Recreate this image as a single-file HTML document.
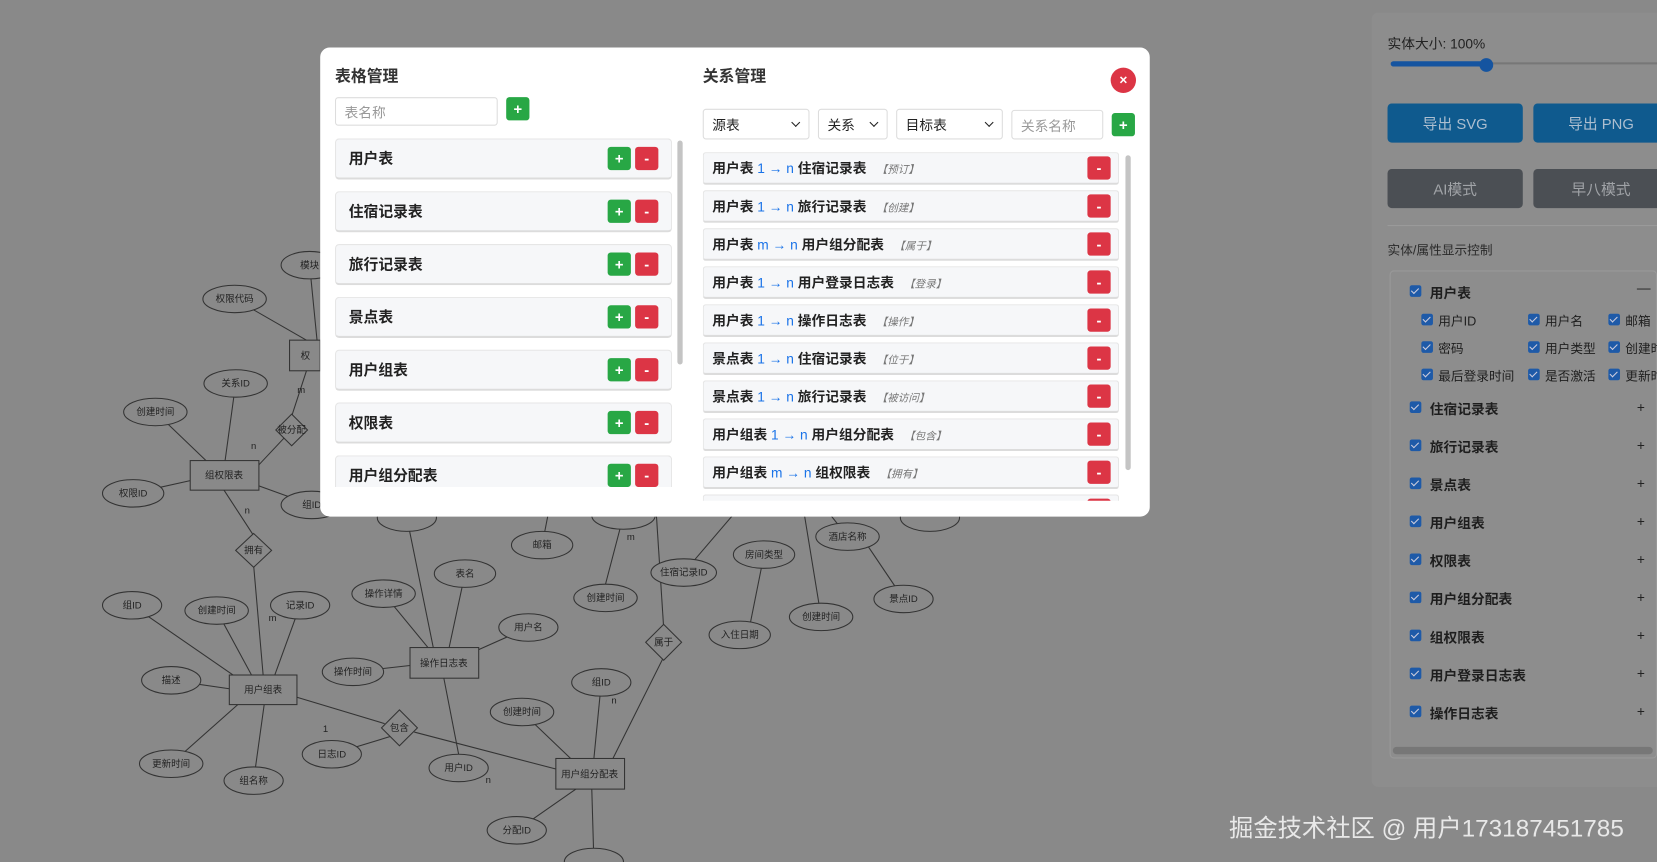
<!DOCTYPE html>
<html><head><meta charset="utf-8"><style>
*{box-sizing:border-box;margin:0;padding:0}
html,body{width:1657px;height:862px;overflow:hidden;background:#898989;font-family:"Liberation Sans","Noto Sans CJK SC",sans-serif}
#s{position:absolute;left:0;top:0;width:1568px;height:816px;transform-origin:0 0;transform:scale(1.05676,1.05637)}
.a{position:absolute}
.modal{left:303px;top:45px;width:785px;height:444px;background:#fff;border-radius:9px;overflow:hidden}
h3{position:absolute;font-size:15px;font-weight:bold;color:#333}
.inp{position:absolute;border:1px solid #ddd;border-radius:3px;background:#fff;font-size:13px;color:#999;padding-left:8px;display:flex;align-items:center}
.sel{color:#222}
.sel:after{content:"";position:absolute;right:9px;top:9px;width:5px;height:5px;border-right:1.6px solid #222;border-bottom:1.6px solid #222;transform:rotate(45deg)}
.g,.r{position:absolute;width:22px;height:22px;border-radius:3px;color:#fff;font-size:14px;font-weight:bold;display:flex;align-items:center;justify-content:center}
.g{background:#28a745}.r{background:#dc3545}
.it{position:absolute;left:14px;width:319px;height:39px;background:#f6f7f9;border:1px solid #e6e6e6;border-bottom:2px solid #dcdcdc;border-radius:4px;font-size:14px;font-weight:bold;color:#222;padding-left:12px;line-height:36px}
.rl{position:absolute;left:362px;width:394px;height:31px;background:#f6f7f9;border:1px solid #e6e6e6;border-bottom:2px solid #dcdcdc;border-radius:3px;font-size:13px;font-weight:bold;color:#222;padding-left:8px;line-height:29px;white-space:nowrap}
.rl b{color:#1a73e8;font-weight:normal}
.rl i{color:#777;font-size:10px;font-weight:normal;margin-left:6px}
.rl .r{left:363px;top:3px}
.panel{left:1298px;top:12px;width:280px;height:733px;background:#8d8d8d;border-radius:6px}
.pt{position:absolute;color:#222;font-size:13px;white-space:nowrap}
.btn{position:absolute;height:37px;border-radius:4px;color:#aebfd0;font-size:14px;display:flex;align-items:center;justify-content:center}
.cb{position:absolute;width:11px;height:11px;background:#1e5aa8;border-radius:2px}
.cb:after{content:"";position:absolute;left:3px;top:1px;width:3px;height:6px;border-right:1.5px solid #ccd;border-bottom:1.5px solid #ccd;transform:rotate(45deg)}
.en{position:absolute;font-size:13px;font-weight:bold;color:#1e1e1e;white-space:nowrap}
.at{position:absolute;font-size:12px;color:#1e1e1e;white-space:nowrap}
.pl{position:absolute;left:1549px;font-size:13px;color:#222}
</style></head><body><div id="s">
<svg class="a" style="left:0;top:0" width="1300" height="816" viewBox="0 0 1300 816" font-family="Liberation Sans,Noto Sans CJK SC,sans-serif" font-size="9" fill="none" stroke="#333" stroke-width="1">
<g>
<line x1="293" y1="251" x2="300" y2="322"/><line x1="222" y1="283" x2="290" y2="322"/><line x1="290" y1="351" x2="276" y2="394"/>
<line x1="223" y1="363" x2="213" y2="436"/><line x1="147" y1="390" x2="195" y2="436"/><line x1="276" y1="407" x2="245" y2="440"/>
<line x1="126" y1="467" x2="180" y2="455"/><line x1="295" y1="478" x2="245" y2="460"/><line x1="212" y1="464" x2="240" y2="507"/>
<line x1="240" y1="535" x2="249" y2="639"/><line x1="125" y1="573" x2="222" y2="640"/><line x1="205" y1="578" x2="238" y2="639"/>
<line x1="284" y1="573" x2="260" y2="639"/><line x1="162" y1="644" x2="217" y2="652"/><line x1="162" y1="723" x2="225" y2="667"/>
<line x1="240" y1="739" x2="250" y2="667"/><line x1="281" y1="660" x2="364" y2="685"/><line x1="314" y1="714" x2="370" y2="697"/>
<line x1="392" y1="693" x2="526" y2="728"/><line x1="363" y1="562" x2="405" y2="613"/><line x1="440" y1="543" x2="425" y2="613"/>
<line x1="385" y1="490" x2="410" y2="613"/><line x1="500" y1="594" x2="453" y2="615"/><line x1="334" y1="636" x2="388" y2="630"/>
<line x1="420" y1="642" x2="434" y2="714"/><line x1="494" y1="674" x2="540" y2="718"/><line x1="569" y1="646" x2="562" y2="718"/>
<line x1="489" y1="786" x2="545" y2="747"/><line x1="560" y1="747" x2="562" y2="816"/><line x1="628" y1="622" x2="580" y2="718"/>
<line x1="628" y1="594" x2="620" y2="470"/><line x1="590" y1="488" x2="573" y2="553"/><line x1="647" y1="542" x2="700" y2="480"/>
<line x1="723" y1="525" x2="710" y2="590"/><line x1="802" y1="508" x2="780" y2="480"/><line x1="855" y1="567" x2="820" y2="515"/>
<line x1="777" y1="584" x2="760" y2="480"/><line x1="513" y1="516" x2="520" y2="480"/>
</g>
<g fill="#898989">
<rect x="274" y="322" width="29" height="29"/><rect x="180" y="436" width="65" height="28"/><rect x="217" y="639" width="64" height="28"/>
<rect x="388" y="613" width="65" height="29"/><rect x="526" y="718" width="65" height="29"/>
<path d="M276 392L291 407L276 422L261 407Z"/><path d="M240 505L257 521L240 537L223 521Z"/><path d="M378 672L395 689L378 706L361 689Z"/><path d="M628 591L645 608L628 625L611 608Z"/>
<ellipse cx="293" cy="251" rx="27" ry="13"/><ellipse cx="222" cy="283" rx="30" ry="13"/><ellipse cx="223" cy="363" rx="30" ry="13"/>
<ellipse cx="147" cy="390" rx="30" ry="13"/><ellipse cx="126" cy="467" rx="29" ry="13"/><ellipse cx="295" cy="478" rx="29" ry="13"/>
<ellipse cx="125" cy="573" rx="28" ry="13"/><ellipse cx="205" cy="578" rx="30" ry="13"/><ellipse cx="284" cy="573" rx="28" ry="13"/>
<ellipse cx="363" cy="562" rx="30" ry="13"/><ellipse cx="440" cy="543" rx="29" ry="13"/><ellipse cx="513" cy="516" rx="29" ry="13"/>
<ellipse cx="647" cy="542" rx="31" ry="13"/><ellipse cx="573" cy="566" rx="30" ry="13"/><ellipse cx="723" cy="525" rx="29" ry="13"/>
<ellipse cx="802" cy="508" rx="30" ry="13"/><ellipse cx="855" cy="567" rx="28" ry="13"/><ellipse cx="777" cy="584" rx="30" ry="13"/>
<ellipse cx="700" cy="601" rx="29" ry="13"/><ellipse cx="500" cy="594" rx="28" ry="13"/><ellipse cx="334" cy="636" rx="29" ry="13"/>
<ellipse cx="162" cy="644" rx="28" ry="13"/><ellipse cx="162" cy="723" rx="30" ry="13"/><ellipse cx="240" cy="739" rx="28" ry="13"/>
<ellipse cx="314" cy="714" rx="28" ry="13"/><ellipse cx="434" cy="727" rx="28" ry="13"/><ellipse cx="494" cy="674" rx="30" ry="13"/>
<ellipse cx="569" cy="646" rx="28" ry="13"/><ellipse cx="489" cy="786" rx="28" ry="13"/><ellipse cx="880" cy="490" rx="28" ry="13"/>
<ellipse cx="590" cy="488" rx="30" ry="13"/><ellipse cx="385" cy="490" rx="28" ry="13"/><ellipse cx="562" cy="816" rx="28" ry="13"/>
</g>
<g fill="#222" stroke="none" text-anchor="middle">
<text x="293" y="254">模块</text><text x="222" y="286">权限代码</text><text x="223" y="366">关系ID</text><text x="147" y="393">创建时间</text>
<text x="126" y="470">权限ID</text><text x="295" y="481">组ID</text><text x="125" y="576">组ID</text><text x="205" y="581">创建时间</text>
<text x="284" y="576">记录ID</text><text x="363" y="565">操作详情</text><text x="440" y="546">表名</text><text x="513" y="519">邮箱</text>
<text x="647" y="545">住宿记录ID</text><text x="573" y="569">创建时间</text><text x="723" y="528">房间类型</text><text x="802" y="511">酒店名称</text>
<text x="855" y="570">景点ID</text><text x="777" y="587">创建时间</text><text x="700" y="604">入住日期</text><text x="500" y="597">用户名</text>
<text x="334" y="639">操作时间</text><text x="162" y="647">描述</text><text x="162" y="726">更新时间</text><text x="240" y="742">组名称</text>
<text x="314" y="717">日志ID</text><text x="434" y="730">用户ID</text><text x="494" y="677">创建时间</text><text x="569" y="649">组ID</text>
<text x="489" y="789">分配ID</text><text x="212" y="453">组权限表</text><text x="249" y="656">用户组表</text><text x="420" y="631">操作日志表</text>
<text x="558" y="736">用户组分配表</text><text x="276" y="410">被分配</text><text x="240" y="524">拥有</text><text x="378" y="692">包含</text><text x="628" y="611">属于</text>
<text x="289" y="340">权</text><text x="240" y="425">n</text><text x="285" y="372">m</text><text x="234" y="486">n</text><text x="258" y="588">m</text>
<text x="308" y="693">1</text><text x="462" y="741">n</text><text x="581" y="666">n</text><text x="597" y="511">m</text>
</g></svg>

<div class="a modal">
<h3 style="left:14px;top:16px">表格管理</h3>
<div class="inp" style="left:14px;top:47px;width:154px;height:27px">表名称</div>
<div class="g" style="left:176px;top:47px">+</div>
<div class="a" style="left:0;top:84px;width:345px;height:332px;overflow:hidden">
<div class="it" style="top:2px">用户表<div class="g" style="left:257px;top:7px">+</div><div class="r" style="left:283px;top:7px">-</div></div>
<div class="it" style="top:52px">住宿记录表<div class="g" style="left:257px;top:7px">+</div><div class="r" style="left:283px;top:7px">-</div></div>
<div class="it" style="top:102px">旅行记录表<div class="g" style="left:257px;top:7px">+</div><div class="r" style="left:283px;top:7px">-</div></div>
<div class="it" style="top:152px">景点表<div class="g" style="left:257px;top:7px">+</div><div class="r" style="left:283px;top:7px">-</div></div>
<div class="it" style="top:202px">用户组表<div class="g" style="left:257px;top:7px">+</div><div class="r" style="left:283px;top:7px">-</div></div>
<div class="it" style="top:252px">权限表<div class="g" style="left:257px;top:7px">+</div><div class="r" style="left:283px;top:7px">-</div></div>
<div class="it" style="top:302px">用户组分配表<div class="g" style="left:257px;top:7px">+</div><div class="r" style="left:283px;top:7px">-</div></div>
<div class="a" style="left:338px;top:4px;width:5px;height:212px;background:#c4c4c4;border-radius:3px"></div>
</div>
<h3 style="left:362px;top:16px">关系管理</h3>
<div class="a" style="left:748px;top:19px;width:24px;height:24px;border-radius:50%;background:#dc3545;color:#fff;font-size:13px;font-weight:bold;text-align:center;line-height:23px">×</div>
<div class="inp sel" style="left:362px;top:58px;width:101px;height:29px">源表</div>
<div class="inp sel" style="left:471px;top:58px;width:66px;height:29px">关系</div>
<div class="inp sel" style="left:545px;top:58px;width:101px;height:29px">目标表</div>
<div class="inp" style="left:654px;top:59px;width:87px;height:28px">关系名称</div>
<div class="g" style="left:749px;top:62px">+</div>
<div class="a" style="left:0;top:99px;width:785px;height:330px;overflow:hidden">
<div class="rl" style="top:0">用户表 <b>1 → n</b> 住宿记录表 <i>【预订】</i><div class="r">-</div></div>
<div class="rl" style="top:36px">用户表 <b>1 → n</b> 旅行记录表 <i>【创建】</i><div class="r">-</div></div>
<div class="rl" style="top:72px">用户表 <b>m → n</b> 用户组分配表 <i>【属于】</i><div class="r">-</div></div>
<div class="rl" style="top:108px">用户表 <b>1 → n</b> 用户登录日志表 <i>【登录】</i><div class="r">-</div></div>
<div class="rl" style="top:144px">用户表 <b>1 → n</b> 操作日志表 <i>【操作】</i><div class="r">-</div></div>
<div class="rl" style="top:180px">景点表 <b>1 → n</b> 住宿记录表 <i>【位于】</i><div class="r">-</div></div>
<div class="rl" style="top:216px">景点表 <b>1 → n</b> 旅行记录表 <i>【被访问】</i><div class="r">-</div></div>
<div class="rl" style="top:252px">用户组表 <b>1 → n</b> 用户组分配表 <i>【包含】</i><div class="r">-</div></div>
<div class="rl" style="top:288px">用户组表 <b>m → n</b> 组权限表 <i>【拥有】</i><div class="r">-</div></div>
<div class="rl" style="top:324px"><div class="r">-</div></div>
<div class="a" style="left:762px;top:3px;width:5px;height:298px;background:#c4c4c4;border-radius:3px"></div>
</div>
</div>

<div class="a panel"></div>
<div class="pt" style="left:1313px;top:31px">实体大小: 100%</div>
<div class="a" style="left:1316px;top:59px;width:252px;height:2px;background:#777"></div>
<div class="a" style="left:1316px;top:58px;width:90px;height:5px;background:#1554a0;border-radius:3px"></div>
<div class="a" style="left:1400px;top:55px;width:13px;height:13px;background:#1554a0;border-radius:50%"></div>
<div class="btn" style="left:1313px;top:98px;width:128px;background:#0f5a8e">导出 SVG</div>
<div class="btn" style="left:1451px;top:98px;width:128px;background:#0f5a8e">导出 PNG</div>
<div class="btn" style="left:1313px;top:160px;width:128px;background:#4b4f54;color:#a0a3a7">AI模式</div>
<div class="btn" style="left:1451px;top:160px;width:128px;background:#4b4f54;color:#a0a3a7">早八模式</div>
<div class="a" style="left:1313px;top:213px;width:255px;height:1px;background:#9a9a9a"></div>
<div class="pt" style="left:1313px;top:228px;font-size:12px;color:#2a2a2a">实体/属性显示控制</div>
<div class="a" style="left:1315px;top:256px;width:253px;height:462px;border:1px solid #999;border-radius:4px"></div>
<div class="cb" style="left:1334px;top:270px"></div><div class="en" style="left:1353px;top:267px">用户表</div><div class="pl" style="top:265px">—</div>
<div class="cb" style="left:1345px;top:297px"></div><div class="at" style="left:1361px;top:295px">用户ID</div>
<div class="cb" style="left:1446px;top:297px"></div><div class="at" style="left:1462px;top:295px">用户名</div>
<div class="cb" style="left:1522px;top:297px"></div><div class="at" style="left:1538px;top:295px">邮箱</div>
<div class="cb" style="left:1345px;top:323px"></div><div class="at" style="left:1361px;top:321px">密码</div>
<div class="cb" style="left:1446px;top:323px"></div><div class="at" style="left:1462px;top:321px">用户类型</div>
<div class="cb" style="left:1522px;top:323px"></div><div class="at" style="left:1538px;top:321px">创建时间</div>
<div class="cb" style="left:1345px;top:349px"></div><div class="at" style="left:1361px;top:347px">最后登录时间</div>
<div class="cb" style="left:1446px;top:349px"></div><div class="at" style="left:1462px;top:347px">是否激活</div>
<div class="cb" style="left:1522px;top:349px"></div><div class="at" style="left:1538px;top:347px">更新时间</div>
<div class="cb" style="left:1334px;top:380px"></div><div class="en" style="left:1353px;top:377px">住宿记录表</div><div class="pl" style="top:378px">+</div>
<div class="cb" style="left:1334px;top:416px"></div><div class="en" style="left:1353px;top:413px">旅行记录表</div><div class="pl" style="top:414px">+</div>
<div class="cb" style="left:1334px;top:452px"></div><div class="en" style="left:1353px;top:449px">景点表</div><div class="pl" style="top:450px">+</div>
<div class="cb" style="left:1334px;top:488px"></div><div class="en" style="left:1353px;top:485px">用户组表</div><div class="pl" style="top:486px">+</div>
<div class="cb" style="left:1334px;top:524px"></div><div class="en" style="left:1353px;top:521px">权限表</div><div class="pl" style="top:522px">+</div>
<div class="cb" style="left:1334px;top:560px"></div><div class="en" style="left:1353px;top:557px">用户组分配表</div><div class="pl" style="top:558px">+</div>
<div class="cb" style="left:1334px;top:596px"></div><div class="en" style="left:1353px;top:593px">组权限表</div><div class="pl" style="top:594px">+</div>
<div class="cb" style="left:1334px;top:632px"></div><div class="en" style="left:1353px;top:629px">用户登录日志表</div><div class="pl" style="top:630px">+</div>
<div class="cb" style="left:1334px;top:668px"></div><div class="en" style="left:1353px;top:665px">操作日志表</div><div class="pl" style="top:666px">+</div>
<div class="a" style="left:1318px;top:707px;width:246px;height:7px;background:#777;border-radius:4px"></div>
<div class="a" style="left:1163px;top:765px;font-size:23px;color:#e8e8e8;white-space:nowrap">掘金技术社区 @ 用户173187451785</div>
</div></body></html>
